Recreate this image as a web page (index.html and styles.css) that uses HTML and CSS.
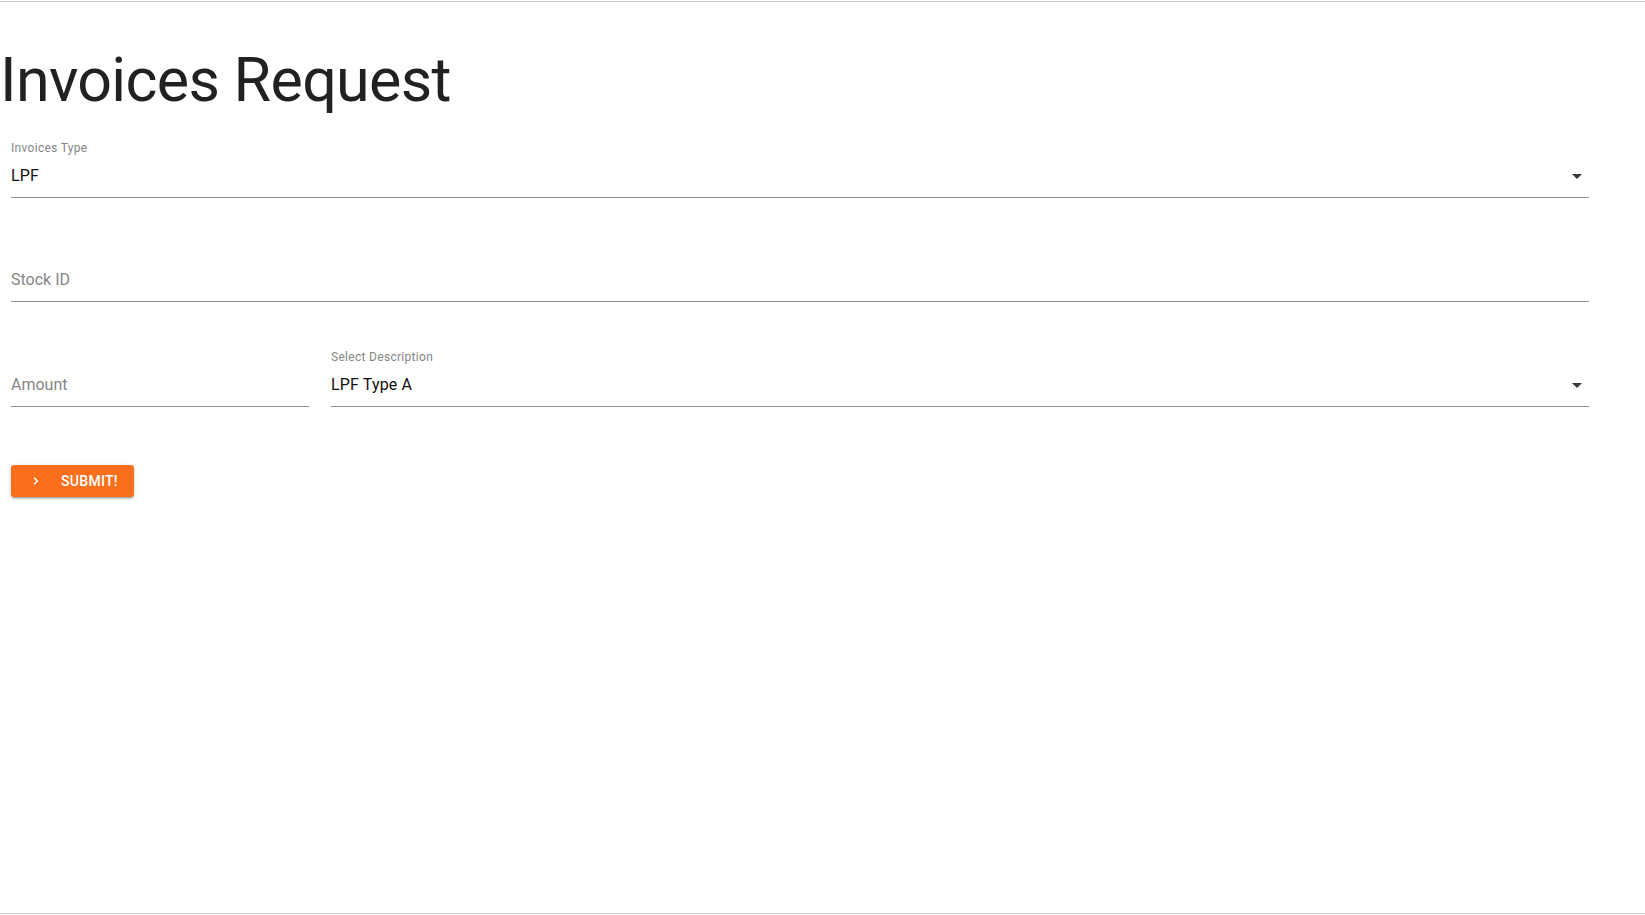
FILE: index.html
```html
<!DOCTYPE html>
<html lang="en">
<head>
<meta charset="utf-8">
<title>Invoices Request</title>
<link rel="stylesheet" href="styles.css">
</head>
<body>
<div class="frame">
  <h1 class="title">Invoices Request</h1>
  <form class="form">
    <div class="field">
      <label class="label">Invoices Type</label>
      <div class="value select">
        <span>LPF</span>
        <svg class="arrow" viewBox="0 0 24 24" width="24" height="24"><path d="M7 10l5 5 5-5z"/></svg>
      </div>
    </div>
    <div class="field field-gap">
      <label class="label"></label>
      <div class="value placeholder">Stock ID</div>
    </div>
    <div class="row field-gap2">
      <div class="field">
        <label class="label"></label>
        <div class="value placeholder">Amount</div>
      </div>
      <div class="field">
        <label class="label">Select Description</label>
        <div class="value select">
          <span>LPF Type A</span>
          <svg class="arrow" viewBox="0 0 24 24" width="24" height="24"><path d="M7 10l5 5 5-5z"/></svg>
        </div>
      </div>
    </div>
    <div class="actions">
      <button type="button" class="submit">
        <svg class="chev" viewBox="0 0 6 8" width="6" height="8"><path d="M1 0.8 L4.4 4 L1 7.2" fill="none" stroke="#fff" stroke-width="1.4"/></svg>
        <span>Submit!</span>
      </button>
    </div>
  </form>
</div>
</body>
</html>
```

FILE: styles.css
```css
html, body {
  margin: 0;
  padding: 0;
  background: #fff;
}

body {
  font-family: Roboto, "Liberation Sans", Arial, sans-serif;
  color: rgba(0, 0, 0, 0.87);
}

.frame {
  margin-top: 1px;
  height: 911px;
  border-top: 1px solid #cacaca;
  border-bottom: 1px solid #cacaca;
  overflow: hidden;
}

.title {
  margin: 47px 0 0 0;
  font-size: 61px;
  line-height: 62px;
  font-weight: 400;
  color: #212121;
  letter-spacing: -0.7px;
}

.form {
  margin: 29px 0 0 11px;
  width: 1578px;
}

.field {
  display: flex;
  flex-direction: column;
  border-bottom: 1px solid #949494;
}

.field-gap {
  margin-top: 46px;
}

.field-gap2 {
  margin-top: 47px;
}

.label {
  display: block;
  height: 12px;
  margin-top: 2px;
  font-size: 12px;
  line-height: 12px;
  letter-spacing: 0.3px;
  color: #858585;
}

.value {
  margin-top: 10px;
  height: 23px;
  padding-bottom: 10px;
  font-size: 16px;
  line-height: 23px;
  letter-spacing: 0.15px;
  color: #111;
}

.placeholder {
  color: #858585;
  letter-spacing: 0;
}

.select {
  display: flex;
  align-items: center;
  justify-content: space-between;
}

.arrow {
  fill: #3a3a3a;
  margin-top: 0;
}

.row {
  display: grid;
  grid-template-columns: 298px 1fr;
  column-gap: 22px;
}

.actions {
  margin-top: 58px;
}

.submit {
  display: inline-flex;
  align-items: center;
  box-sizing: border-box;
  width: 123px;
  height: 32px;
  padding: 0 0 0 22px;
  border: none;
  border-radius: 3px;
  background: #f96f1b;
  color: #fff;
  font-family: Roboto, "Liberation Sans", Arial, sans-serif;
  font-size: 14px;
  font-weight: 500;
  letter-spacing: 0.3px;
  text-transform: uppercase;
  box-shadow: 0 3px 1px -2px rgba(0,0,0,0.2), 0 2px 2px 0 rgba(0,0,0,0.14), 0 1px 5px 0 rgba(0,0,0,0.12);
  cursor: pointer;
}

.chev {
  margin-right: 22px;
}
```
